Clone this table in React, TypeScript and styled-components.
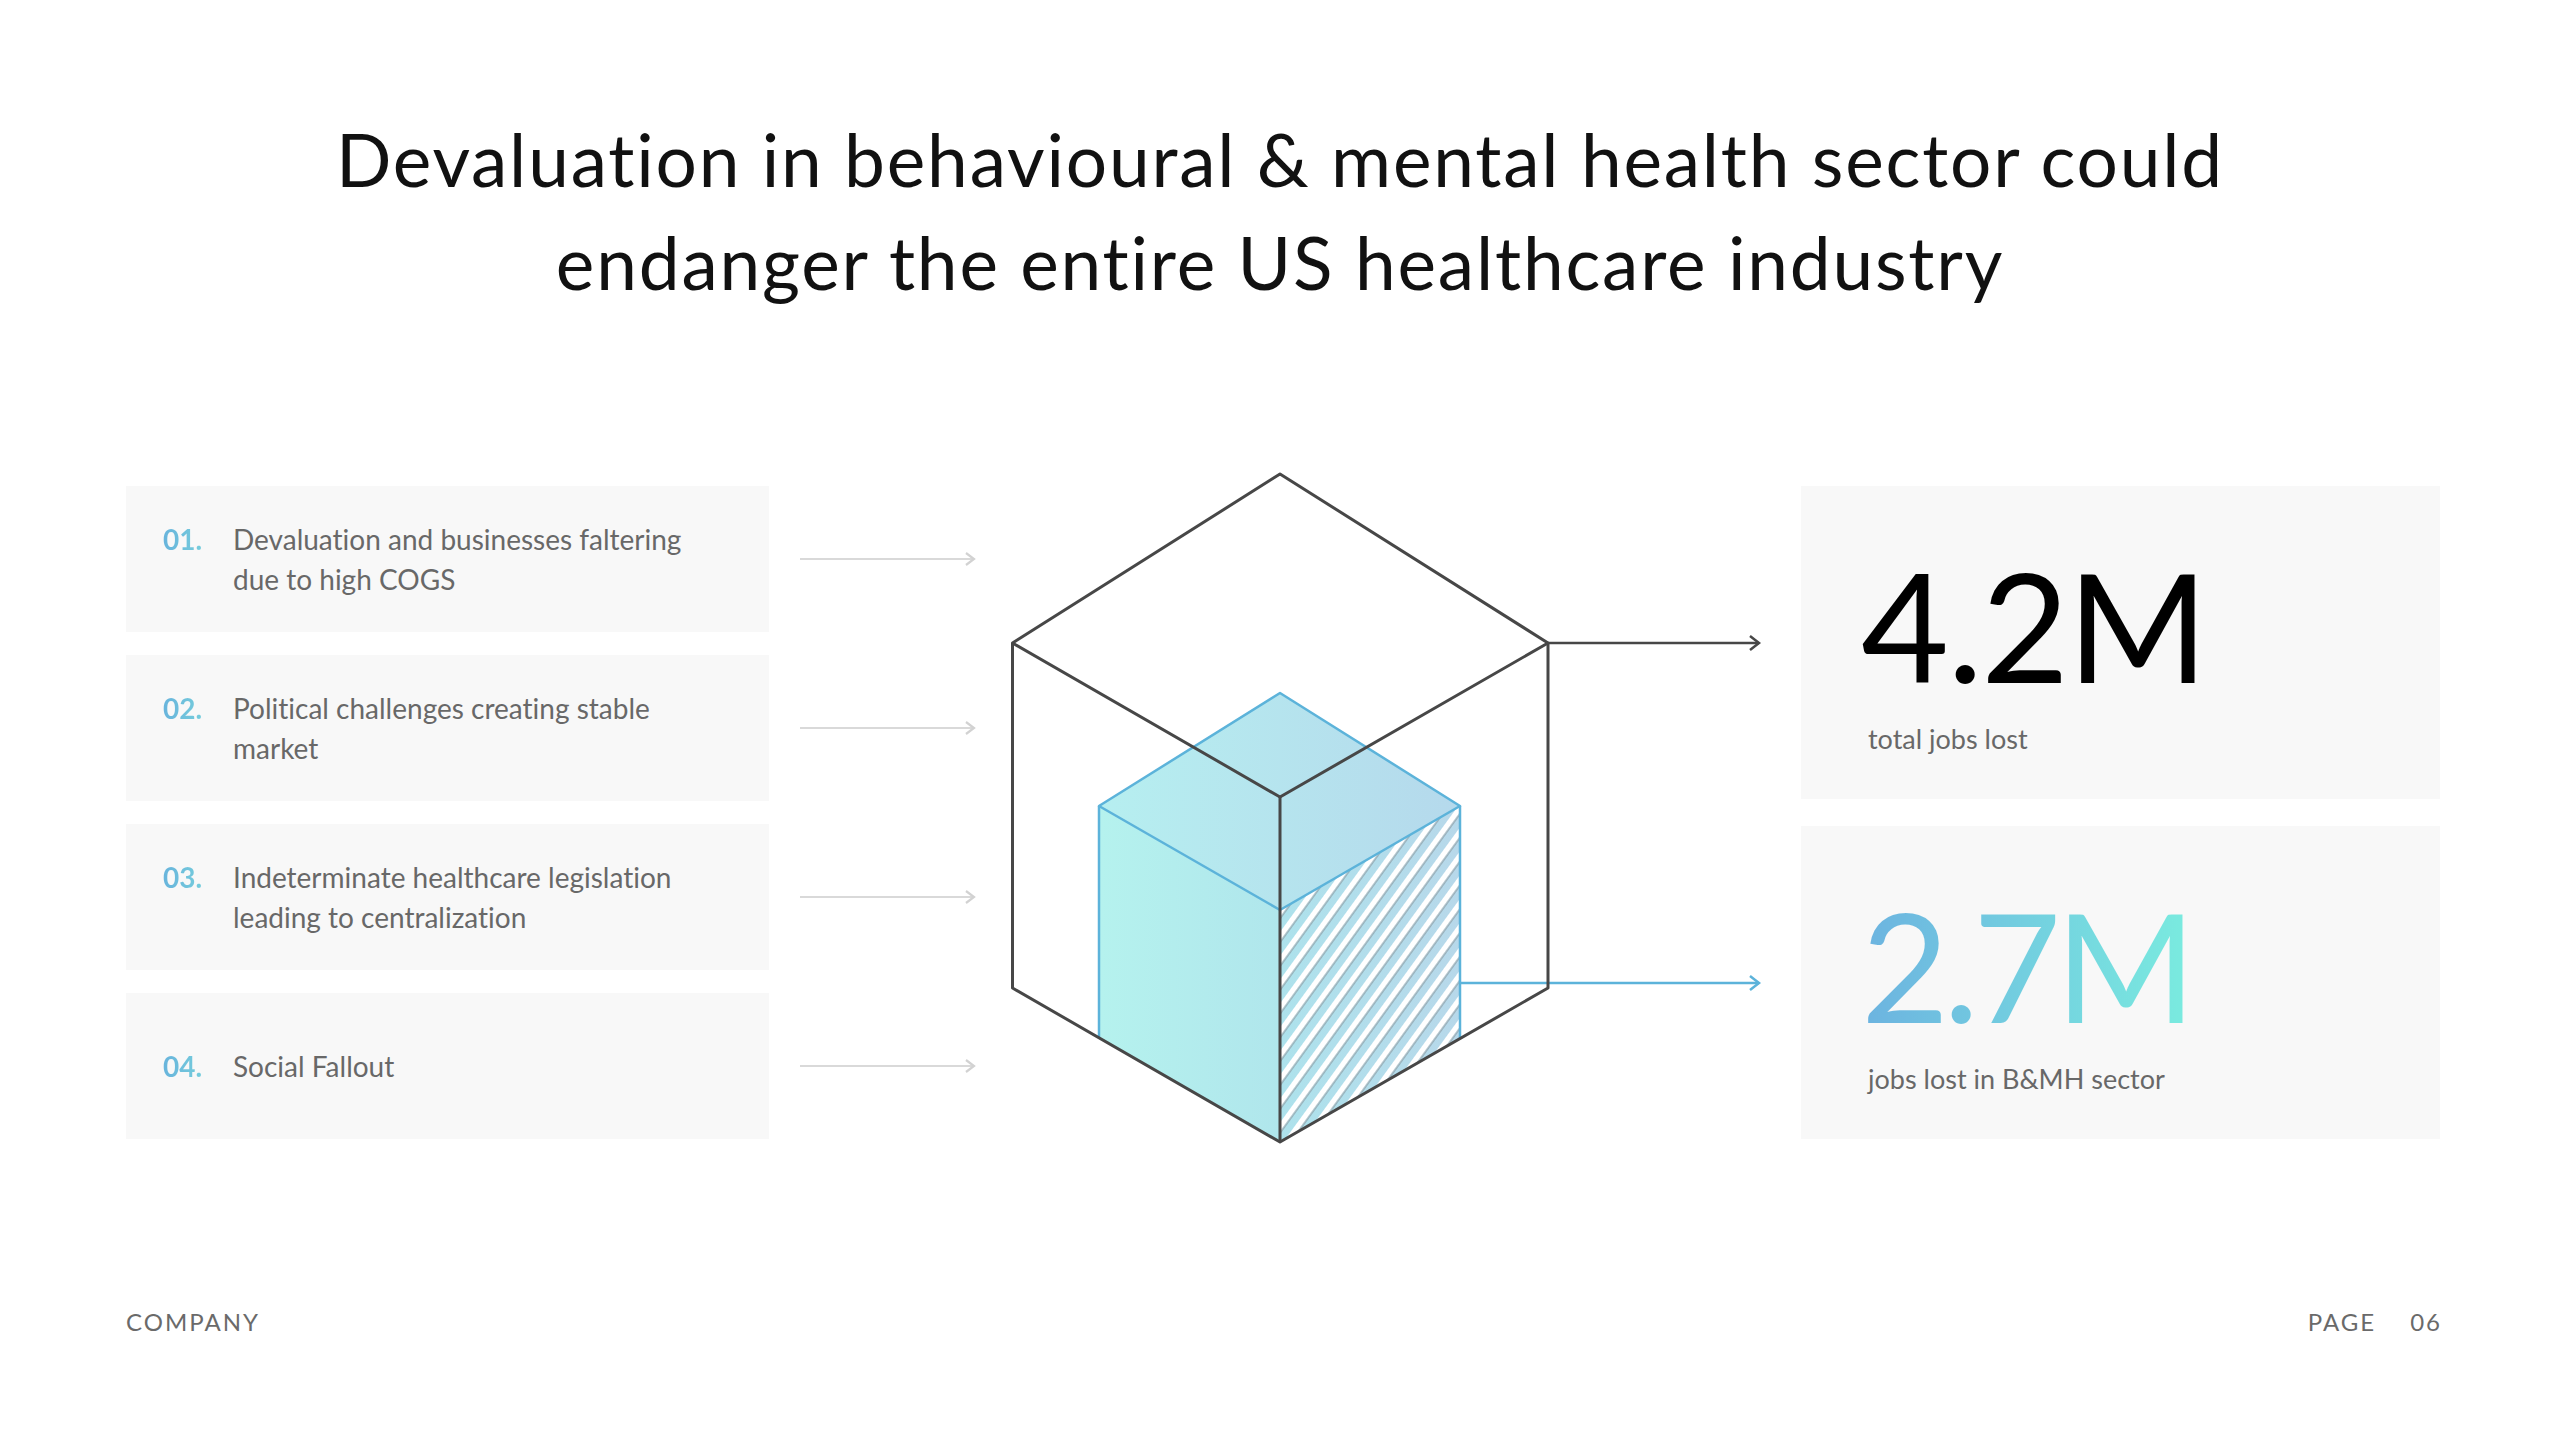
import styled, { createGlobalStyle } from 'styled-components';

const GlobalStyle = createGlobalStyle`
  html, body {
    margin: 0;
    padding: 0;
    background: #ffffff;
  }
  body {
    font-family: Lato, "Open Sans", sans-serif;
    font-variant-ligatures: none;
    -webkit-font-smoothing: antialiased;
  }
`;

const points = [
  { num: '01.', lines: ['Devaluation and businesses faltering', 'due to high COGS'] },
  { num: '02.', lines: ['Political challenges creating stable', 'market'] },
  { num: '03.', lines: ['Indeterminate healthcare legislation', 'leading to centralization'] },
  { num: '04.', lines: ['Social Fallout'] },
];

const stats = [
  { value: '4.2M', label: 'total jobs lost', accent: false },
  { value: '2.7M', label: 'jobs lost in B&MH sector', accent: true },
];

function Connector() {
  return (
    <ConnectorSvg viewBox="0 0 176 20" width={176} height={20}>
      <line x1="0" y1="10" x2="174" y2="10" stroke="#d9d9d9" strokeWidth="2.2" />
      <polyline points="166,4 174,10 166,16" fill="none" stroke="#d2d2d2" strokeWidth="2.2" />
    </ConnectorSvg>
  );
}

// cube drawing, coordinates are page px minus (1000, 460)
function CubeDiagram() {
  return (
    <DiagramSvg viewBox="0 0 780 705" width={780} height={705}>
      <defs>
        <linearGradient id="leftFace" x1="99" y1="0" x2="280" y2="0" gradientUnits="userSpaceOnUse">
          <stop offset="0" stopColor="#b5f2ee" />
          <stop offset="1" stopColor="#b0e6ec" />
        </linearGradient>
        <linearGradient id="topFace" x1="99" y1="0" x2="460" y2="0" gradientUnits="userSpaceOnUse">
          <stop offset="0" stopColor="#b6eff0" />
          <stop offset="1" stopColor="#b5d9ec" />
        </linearGradient>
        <linearGradient id="rightFace" x1="280" y1="0" x2="460" y2="0" gradientUnits="userSpaceOnUse">
          <stop offset="0" stopColor="#ade2ec" />
          <stop offset="1" stopColor="#b7d8ea" />
        </linearGradient>
        <pattern id="hatch" width="14" height="14" patternUnits="userSpaceOnUse" patternTransform="rotate(36)">
          <rect x="0" y="0" width="5.5" height="14" fill="#ffffff" />
          <rect x="5.5" y="0" width="1.2" height="14" fill="#8c9ea6" />
        </pattern>
      </defs>

      {/* inner cube */}
      <polygon points="99,346 280,450 280,682 99,578" fill="url(#leftFace)" />
      <polygon points="280,233 460,346 280,450 99,346" fill="url(#topFace)" />
      <polygon points="280,450 460,346 460,578.5 280,682" fill="url(#rightFace)" />
      <polygon points="280,450 460,346 460,578.5 280,682" fill="url(#hatch)" />
      <g fill="none" stroke="#5cb3da" strokeWidth="2.5" strokeLinejoin="round">
        <polygon points="280,233 460,346 280,450 99,346" />
        <line x1="99" y1="346" x2="99" y2="578" />
        <line x1="460" y1="346" x2="460" y2="578.5" />
        <line x1="460" y1="523" x2="759" y2="523" />
        <polyline points="750,516 759,523 750,530" strokeLinejoin="miter" />
      </g>

      {/* outer cube */}
      <g fill="none" stroke="#474747" strokeWidth="3" strokeLinejoin="round">
        <polygon points="280,14 548,183 548,528 280,682 12.5,528 12.5,183" />
        <polyline points="12.5,183 280,337 548,183" />
        <line x1="280" y1="337" x2="280" y2="682" />
        <line x1="548" y1="183" x2="759" y2="183" strokeWidth="2.5" />
        <polyline points="750,176 759,183 750,190" strokeWidth="2.5" strokeLinejoin="miter" />
      </g>
    </DiagramSvg>
  );
}

export default function App() {
  return (
    <>
      <GlobalStyle />
      <Slide>
        <Title>
          Devaluation in behavioural &amp; mental health sector could
          <br />
          endanger the entire US healthcare industry
        </Title>

        <Main>
          <PointList>
            {points.map((p) => (
              <PointRow key={p.num}>
                <PointCard>
                  <PointNum>{p.num}</PointNum>
                  <PointText>
                    {p.lines.map((l) => (
                      <span key={l}>{l}</span>
                    ))}
                  </PointText>
                </PointCard>
                <Connector />
              </PointRow>
            ))}
          </PointList>

          <CubeDiagram />

          <StatList>
            {stats.map((s) => (
              <StatCard key={s.value}>
                <StatValue $accent={s.accent}>{s.value}</StatValue>
                <StatLabel>{s.label}</StatLabel>
              </StatCard>
            ))}
          </StatList>
        </Main>

        <Footer>
          <span>Company</span>
          <PageNo>
            <span>Page</span>
            <span>06</span>
          </PageNo>
        </Footer>
      </Slide>
    </>
  );
}

const Slide = styled.div`
  width: 2560px;
  height: 1440px;
  box-sizing: border-box;
  padding: 108px 120px 0 126px;
  display: flex;
  flex-direction: column;
  background: #ffffff;
  overflow: hidden;
`;

const Title = styled.h1`
  margin: 0;
  padding-right: 6px;
  text-align: center;
  font-family: Lato, sans-serif;
  font-weight: 400;
  font-size: 73px;
  line-height: 103px;
  letter-spacing: 1.8px;
  color: #111111;
`;

const Main = styled.div`
  display: flex;
  align-items: center;
  margin-top: 146px;
`;

const PointList = styled.div`
  display: flex;
  flex-direction: column;
  gap: 23px;
  width: 854px;
  flex: none;
`;

const PointRow = styled.div`
  display: flex;
  align-items: center;
`;

const PointCard = styled.div`
  width: 643px;
  height: 146px;
  box-sizing: border-box;
  padding: 0 36px 0 37px;
  background: #f8f8f8;
  display: flex;
  align-items: baseline;
  align-content: center;
  flex-wrap: wrap;
`;

const PointNum = styled.span`
  width: 70px;
  flex: none;
  font-size: 28px;
  font-weight: 700;
  line-height: 40px;
  background: linear-gradient(90deg, #68b4dc, #80e0dc);
  -webkit-background-clip: text;
  background-clip: text;
  color: transparent;
`;

const PointText = styled.p`
  margin: 0;
  flex: 1;
  font-size: 28px;
  line-height: 40px;
  color: #686868;
  span {
    display: block;
    white-space: nowrap;
  }
`;

const ConnectorSvg = styled.svg`
  display: block;
  margin-left: 31px;
  flex: none;
`;

const DiagramSvg = styled.svg`
  display: block;
  flex: none;
  margin-left: 20px;
`;

const StatList = styled.div`
  display: flex;
  flex-direction: column;
  gap: 27px;
  width: 639px;
  margin-left: 21px;
  flex: none;
`;

const StatCard = styled.div`
  height: 313px;
  box-sizing: border-box;
  padding: 62px 0 0 60px;
  background: #f8f8f8;
  display: flex;
  flex-direction: column;
  align-items: flex-start;
`;

const StatValue = styled.div<{ $accent?: boolean }>`
  font-size: 152px;
  line-height: 152px;
  font-weight: 400;
  letter-spacing: ${(p) => (p.$accent ? '-6px' : '-2px')};
  color: #000000;
  ${(p) =>
    p.$accent &&
    `
    background: linear-gradient(90deg, #6cb3e0, #7aebdf);
    -webkit-background-clip: text;
    background-clip: text;
    color: transparent;
  `}
`;

const StatLabel = styled.div`
  margin: 21px 0 0 7px;
  font-size: 27px;
  line-height: 36px;
  color: #686868;
`;

const Footer = styled.footer`
  margin-top: 142px;
  display: flex;
  justify-content: space-between;
  font-size: 24px;
  line-height: 30px;
  letter-spacing: 2px;
  text-transform: uppercase;
  color: #6a6a6a;
`;

const PageNo = styled.div`
  display: flex;
  gap: 34px;
  margin-right: -2px;
`;
